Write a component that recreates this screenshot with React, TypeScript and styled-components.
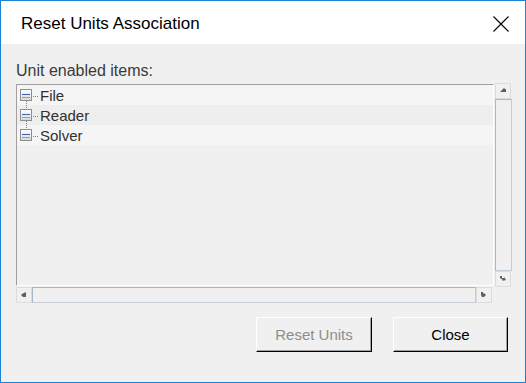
import React from 'react';
import styled, { createGlobalStyle } from 'styled-components';

const GlobalStyle = createGlobalStyle`
  html, body {
    margin: 0;
    padding: 0;
    background: #f0f0f0;
  }
  * {
    box-sizing: border-box;
  }
`;

type Item = {
  label: string;
};

const items: Item[] = [{ label: 'File' }, { label: 'Reader' }, { label: 'Solver' }];

const CloseIcon: React.FC = () => (
  <svg width="16" height="16" viewBox="0 0 16 16">
    <path d="M0.5 0.5 L15.5 15.5 M15.5 0.5 L0.5 15.5" stroke="#000" strokeWidth="1.1" fill="none" />
  </svg>
);

type ArrowDir = 'up' | 'down' | 'left' | 'right';

const arrowPaths: Record<ArrowDir, string> = {
  up: 'M0 4 L3 1 L4 0 L5 1 L6 1 L6 4 Z',
  down: 'M0 0 L2 0 L2 2 L4 2 L4 1 L6 4 L2 5 L3 4 L0 2 Z',
  left: 'M5 0 L5 5 L2 5 L0 3 L1 2 Z',
  right: 'M0 0 L2 0 L2 2 L3 1 L5 3 L3 5 L1 5 L0 3 Z',
};

const Arrow: React.FC<{ dir: ArrowDir }> = ({ dir }) => (
  <svg width="7" height="6" viewBox="0 0 7 6">
    <path d={arrowPaths[dir]} fill="#5f5f5f" />
  </svg>
);

const App: React.FC = () => {
  return (
    <>
      <GlobalStyle />
      <StyledWindow>
        <StyledTitleBar>
          <StyledTitle>Reset Units Association</StyledTitle>
          <StyledCloseButton>
            <CloseIcon />
          </StyledCloseButton>
        </StyledTitleBar>
        <StyledBody>
          <StyledLabel>Unit enabled items:</StyledLabel>
          <StyledListArea>
            <StyledTree>
              {items.map((item, i) => (
                <StyledRow key={item.label} alt={i % 2 === 1}>
                  <StyledExpander last={i === items.length - 1} />
                  <StyledItemText>{item.label}</StyledItemText>
                </StyledRow>
              ))}
            </StyledTree>
            <StyledVScroll>
              <StyledScrollButton>
                <Arrow dir="up" />
              </StyledScrollButton>
              <StyledThumb />
              <StyledScrollButton>
                <Arrow dir="down" />
              </StyledScrollButton>
            </StyledVScroll>
            <StyledHScroll>
              <StyledScrollButton>
                <Arrow dir="left" />
              </StyledScrollButton>
              <StyledThumb />
              <StyledScrollButton>
                <Arrow dir="right" />
              </StyledScrollButton>
            </StyledHScroll>
          </StyledListArea>
          <StyledButtonRow>
            <StyledButton disabled>Reset Units</StyledButton>
            <StyledButton>Close</StyledButton>
          </StyledButtonRow>
        </StyledBody>
      </StyledWindow>
    </>
  );
};
export default App;

const uiFont = `"Liberation Sans", Arial, sans-serif`;

const StyledWindow = styled.div`
  width: 526px;
  height: 383px;
  border: 1px solid #1883d7;
  background: #f0f0f0;
  display: flex;
  flex-direction: column;
  font-family: ${uiFont};
`;

const StyledTitleBar = styled.div`
  height: 43px;
  background: #ffffff;
  display: flex;
  align-items: center;
  justify-content: space-between;
  padding: 2px 16px 0 20px;
`;

const StyledTitle = styled.div`
  font-size: 17px;
  color: #000;
`;

const StyledCloseButton = styled.div`
  width: 16px;
  height: 16px;
  display: flex;
`;

const StyledBody = styled.div`
  flex: 1;
  display: flex;
  flex-direction: column;
  padding: 0 17px 0 15px;
`;

const StyledLabel = styled.div`
  margin-top: 18px;
  height: 21px;
  font-size: 16px;
  line-height: 18px;
  color: #3a3a3a;
`;

const StyledListArea = styled.div`
  display: grid;
  grid-template-columns: 479px 17px;
  grid-template-rows: 204px 16px;
`;

const StyledTree = styled.div`
  margin-top: 1px;
  width: 478px;
  height: 202px;
  border-top: 1px solid #a0a0a0;
  border-left: 1px solid #a0a0a0;
  border-right: 1px solid #ffffff;
  border-bottom: 1px solid #ffffff;
  background: #f0f0f0;
  display: flex;
  flex-direction: column;
`;

const StyledRow = styled.div<{ alt: boolean }>`
  height: 20px;
  display: flex;
  align-items: center;
  padding-left: 3px;
  background: ${(props) => (props.alt ? '#eeeeee' : '#f5f5f5')};
`;

const StyledExpander = styled.span<{ last: boolean }>`
  position: relative;
  width: 12px;
  height: 12px;
  border: 1px solid #8f8f8f;
  background: linear-gradient(#ffffff, #d8d8d8);
  flex-shrink: 0;

  &::before {
    content: '';
    position: absolute;
    left: 1px;
    right: 1px;
    top: 4px;
    height: 2px;
    border-top: 1px solid #3d62b4;
    border-bottom: 1px solid #8aa0d0;
  }

  &::after {
    content: '';
    display: ${(props) => (props.last ? 'none' : 'block')};
    position: absolute;
    left: 5px;
    top: 11px;
    height: 9px;
    border-left: 1px dotted #808080;
  }
`;

const StyledItemText = styled.span`
  position: relative;
  margin-left: 8px;
  font-size: 15px;
  color: #303030;

  &::before {
    content: '';
    position: absolute;
    left: -7px;
    top: 9px;
    width: 5px;
    border-top: 1px dotted #808080;
  }
`;

const StyledVScroll = styled.div`
  width: 17px;
  height: 204px;
  display: flex;
  flex-direction: column;
`;

const StyledHScroll = styled.div`
  width: 476px;
  height: 16px;
  display: flex;
`;

const StyledScrollButton = styled.div`
  flex: 0 0 16px;
  height: 16px;
  width: 16px;
  border: 1px solid #dcdcdc;
  background: #f0f0f0;
  display: flex;
  align-items: center;
  justify-content: center;
`;

const StyledThumb = styled.div`
  flex: 1;
  border: 1px solid #abb7c4;
  border-right-color: #c4ccd6;
  border-bottom-color: #c4ccd6;
  background: #f0f0f0;
`;

const StyledButtonRow = styled.div`
  margin-top: 14px;
  display: flex;
  justify-content: flex-end;
  gap: 21px;
`;

const StyledButton = styled.button`
  width: 115px;
  height: 35px;
  &:first-child {
    width: 116px;
  }
  padding: 0;
  background: #f0f0f0;
  border-top: 1px solid #ffffff;
  border-left: 1px solid #ffffff;
  border-right: 1px solid #000000;
  border-bottom: 1px solid #000000;
  box-shadow: inset -1px -1px 0 #a0a0a0;
  font-family: ${uiFont};
  font-size: 15px;
  font-weight: 400;
  color: #000;
  &:disabled {
    color: #8d8d8d;
  }
`;
